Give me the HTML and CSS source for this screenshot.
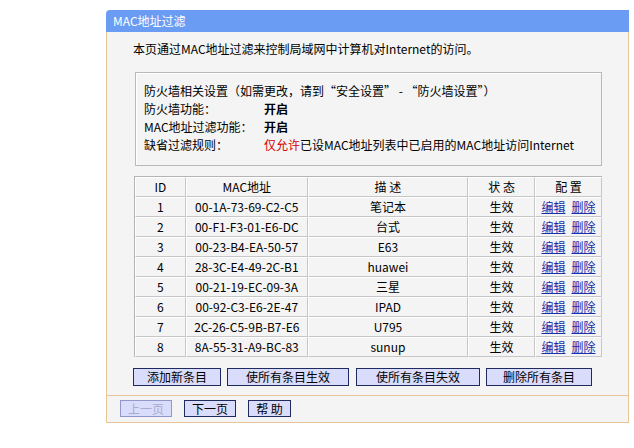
FILE: index.html
```html
<!DOCTYPE html>
<html lang="zh-CN">
<head>
    <meta charset="UTF-8">
    <title>MAC地址过滤</title>
    <link rel="stylesheet" href="styles.css">
</head>
<body>
    <div class="panel">
        <!-- Title bar -->
        <div class="panel-title">MAC地址过滤</div>

        <div class="panel-body">
            <p class="intro">本页通过MAC地址过滤来控制局域网中计算机对Internet的访问。</p>

            <!-- Firewall info -->
            <div class="info-box">
                <div class="info-line">防火墙相关设置（如需更改，请到“安全设置” - “防火墙设置”）</div>
                <div class="info-line"><span class="info-label">防火墙功能：</span><b>开启</b></div>
                <div class="info-line"><span class="info-label">MAC地址过滤功能：</span><b>开启</b></div>
                <div class="info-line"><span class="info-label">缺省过滤规则：</span><span class="red">仅允许</span>已设MAC地址列表中已启用的MAC地址访问Internet</div>
            </div>

            <!-- MAC list -->
            <table class="mac-table">
                <tr>
                    <td class="col-id">ID</td>
                    <td class="col-mac">MAC地址</td>
                    <td class="col-desc">描 述</td>
                    <td class="col-state">状 态</td>
                    <td class="col-conf">配 置</td>
                </tr>
                <tr><td>1</td><td>00-1A-73-69-C2-C5</td><td>笔记本</td><td>生效</td><td><a href="#">编辑</a><a href="#">删除</a></td></tr>
                <tr><td>2</td><td>00-F1-F3-01-E6-DC</td><td>台式</td><td>生效</td><td><a href="#">编辑</a><a href="#">删除</a></td></tr>
                <tr><td>3</td><td>00-23-B4-EA-50-57</td><td>E63</td><td>生效</td><td><a href="#">编辑</a><a href="#">删除</a></td></tr>
                <tr><td>4</td><td>28-3C-E4-49-2C-B1</td><td>huawei</td><td>生效</td><td><a href="#">编辑</a><a href="#">删除</a></td></tr>
                <tr><td>5</td><td>00-21-19-EC-09-3A</td><td>三星</td><td>生效</td><td><a href="#">编辑</a><a href="#">删除</a></td></tr>
                <tr><td>6</td><td>00-92-C3-E6-2E-47</td><td>IPAD</td><td>生效</td><td><a href="#">编辑</a><a href="#">删除</a></td></tr>
                <tr><td>7</td><td>2C-26-C5-9B-B7-E6</td><td>U795</td><td>生效</td><td><a href="#">编辑</a><a href="#">删除</a></td></tr>
                <tr><td>8</td><td>8A-55-31-A9-BC-83</td><td>sunup</td><td>生效</td><td><a href="#">编辑</a><a href="#">删除</a></td></tr>
            </table>

            <div class="actions">
                <button class="btn w88">添加新条目</button>
                <button class="btn w122">使所有条目生效</button>
                <button class="btn w124">使所有条目失效</button>
                <button class="btn w106">删除所有条目</button>
            </div>
        </div>

        <!-- Paging -->
        <div class="panel-foot">
            <button class="btn page" disabled>上一页</button>
            <button class="btn page">下一页</button>
            <button class="btn help">帮 助</button>
        </div>
    </div>
</body>
</html>
```

FILE: styles.css
```css
* {
    margin: 0;
    padding: 0;
    box-sizing: border-box;
}

body {
    background: #fff;
    color: #000;
    font-family: "Noto Sans CJK SC", "Liberation Sans", sans-serif;
    font-size: 12px;
}

/* Panel */
.panel {
    width: 523px;
    margin: 10px 0 0 106px;
}

.panel-title {
    height: 22px;
    line-height: 22px;
    padding-left: 7px;
    background: #6b9cf3;
    color: #fff;
    border-top-left-radius: 4px;
}

.panel-body {
    background: #f4f4f4;
    border-left: 1px solid #e6c596;
    border-right: 1px solid #e6c596;
    padding: 0 26px 9px 26px;
}

.intro {
    line-height: 18px;
    padding-top: 8px;
}

/* Info box */
.info-box {
    margin: 14px 0 0 2px;
    padding: 9px 0 11px 8px;
    border: 1px solid #b9b9b9;
    box-shadow: inset 1px 1px 0 #fff;
}

.info-line {
    line-height: 18px;
    white-space: nowrap;
}

.info-label {
    display: inline-block;
    width: 120px;
}

.red {
    color: #d40000;
}

/* Table */
.mac-table {
    margin: 10px 0 0 1px;
    width: 468px;
    border-spacing: 0;
    border-collapse: separate;
    border-top: 1px solid #b4b4b4;
    border-left: 1px solid #b4b4b4;
}

.mac-table td {
    height: 20px;
    line-height: 18px;
    padding: 0;
    text-align: center;
    border: 1px solid #c6c6c6;
    border-top-color: #fff;
    border-left-color: #fff;
    white-space: nowrap;
}

.col-id { width: 51px; }
.col-mac { width: 122px; }
.col-desc { width: 161px; }
.col-state { width: 67px; }
.col-conf { width: 67px; }

.mac-table a {
    color: #1a2fa8;
    text-decoration: underline;
    margin: 0 3px;
}

/* Buttons */
.actions {
    display: flex;
    gap: 6px;
    margin-top: 11px;
}

.btn {
    height: 18px;
    line-height: 16px;
    font-family: "Noto Sans CJK SC", sans-serif;
    font-size: 12px;
    color: #000;
    background: #d9dcfa;
    border: 1px solid #1f2b5e;
}

.w88 { width: 88px; }
.w122 { width: 122px; }
.w124 { width: 124px; margin-left: 1px; }
.w106 { width: 106px; }

.panel-foot {
    display: flex;
    gap: 12px;
    background: #f4f4f4;
    border: 1px solid #e6c596;
    padding: 4px 0 5px 13px;
    height: 28px;
}

.btn.page {
    width: 52px;
    height: 17px;
}

.btn.help {
    width: 43px;
    height: 17px;
}

.btn:disabled {
    color: #a8acd0;
    border-color: #8f98c8;
}
```
